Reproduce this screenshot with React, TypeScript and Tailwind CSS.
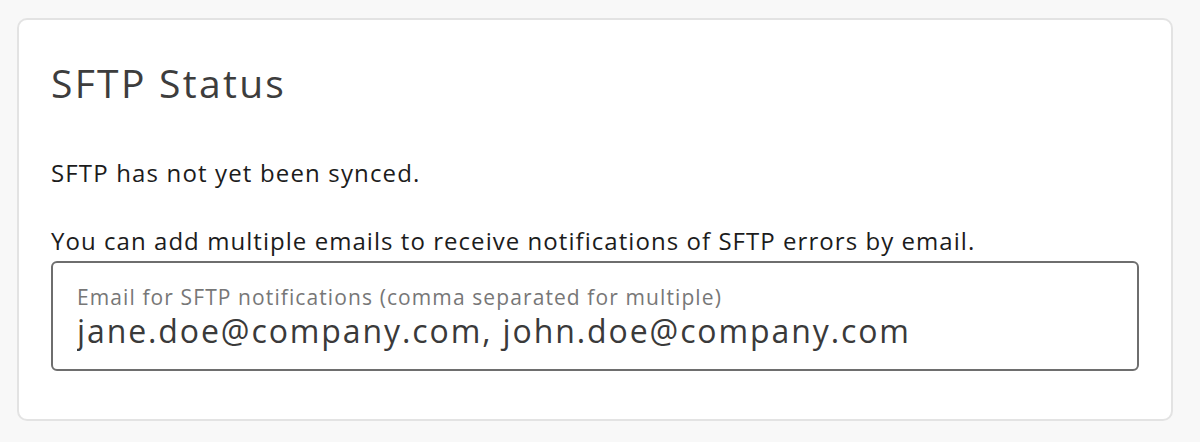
import React from 'react';

export default function App() {
  return (
    <div className="min-h-screen bg-[#f8f8f8] pt-[18px] pl-[17px] pr-[27px] pb-[21px]" style={{ fontFamily: '"Open Sans", Lato, sans-serif' }}>
      <div className="bg-white border-2 border-[#e3e3e3] rounded-[10px] px-[32px] pt-[39px] pb-[48px]">
        <h2 className="text-[39px] leading-[48px] tracking-[2.3px] text-[#3d3d3d] font-normal">SFTP Status</h2>
        <p className="mt-[50px] text-[24px] leading-[32px] tracking-[1.15px] text-[#1c1c1c]">SFTP has not yet been synced.</p>
        <p className="mt-[36px] text-[24px] leading-[32px] tracking-[1.05px] text-[#1c1c1c]">
          You can add multiple emails to receive notifications of SFTP errors by email.
        </p>
        <div className="mt-[4px] border-2 border-[#6e6e6e] rounded-[6px] pl-[24px] pr-4 pt-[20px] pb-[18px]">
          <label className="block text-[21px] leading-[28px] tracking-[1.1px] text-[#777777]">
            Email for SFTP notifications (comma separated for multiple)
          </label>
          <input
            className="block w-full text-[32px] leading-[40px] h-[40px] tracking-[1.9px] text-[#3a3a3a] outline-none bg-transparent"
            defaultValue="jane.doe@company.com, john.doe@company.com"
          />
        </div>
      </div>
    </div>
  );
}
